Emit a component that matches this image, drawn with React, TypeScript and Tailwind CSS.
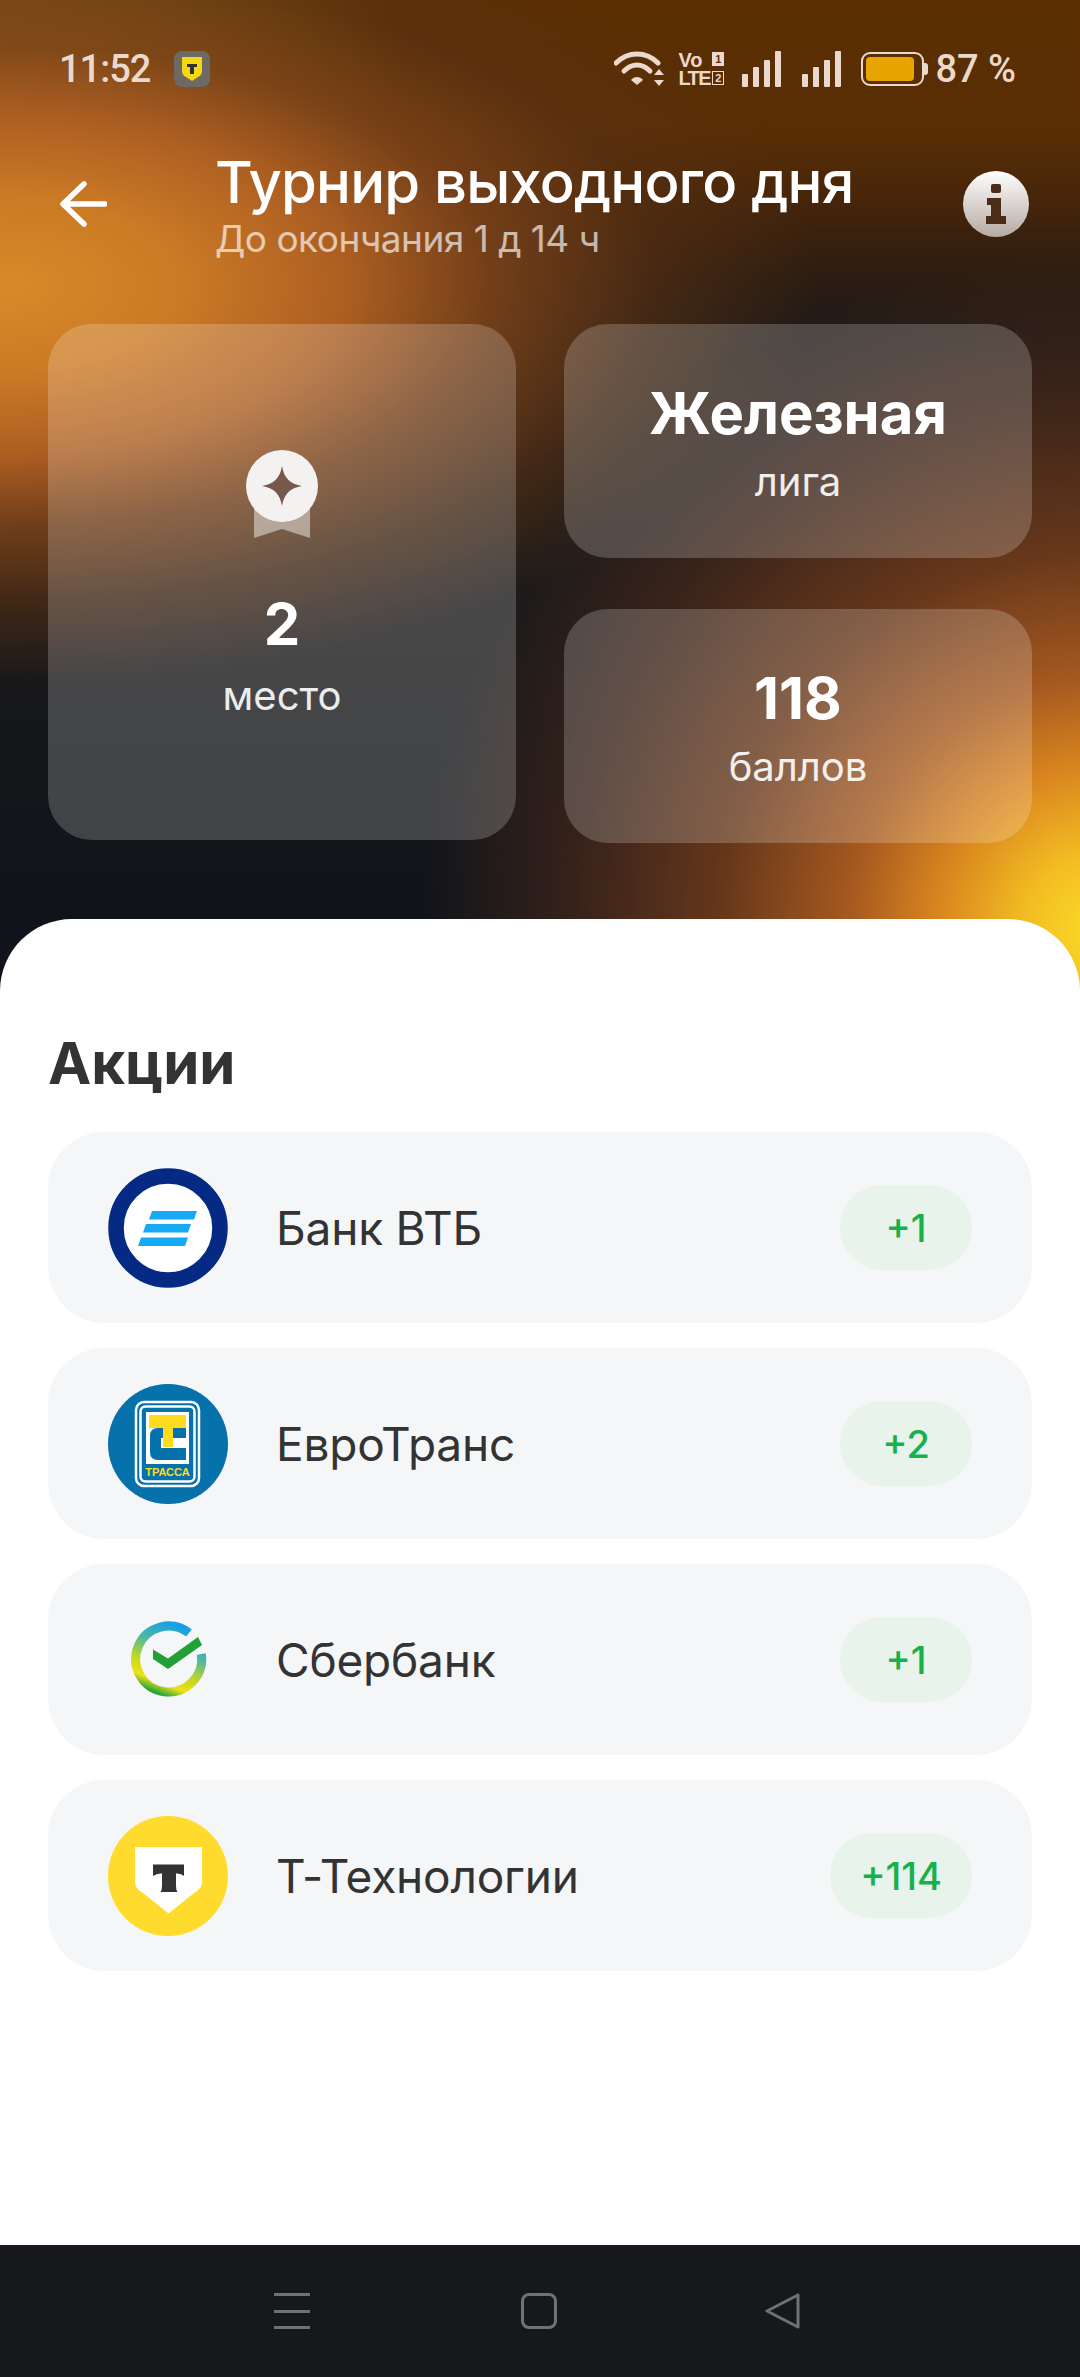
import React from 'react';

const font = { fontFamily: 'Inter, "Noto Sans", sans-serif' };

const stocks = [
  { name: 'Банк ВТБ', delta: '+1', logo: 'vtb' },
  { name: 'ЕвроТранс', delta: '+2', logo: 'trassa' },
  { name: 'Сбербанк', delta: '+1', logo: 'sber' },
  { name: 'Т-Технологии', delta: '+114', logo: 'tbank' }
];

const StatusIcons = () => (
  <div className="flex items-center">
    {/* Wifi */}
    <svg width="50" height="36" viewBox="0 0 50 36" fill="none" stroke="#ead9cc" strokeWidth="5" strokeLinecap="round">
      <path d="M2 12C14 0 32 0 44 12" />
      <path d="M10 20C18 12 28 12 36 20" />
      <path d="M17 29l6 5 6-5c-3-4-9-4-12 0z" fill="#ead9cc" stroke="none" />
      <path d="M45 18l5 6H40zM45 35l5-6H40z" fill="#ead9cc" stroke="none" />
    </svg>
    {/* VoLTE */}
    <div className="relative ml-[14px] h-[36px] w-[46px] text-[20px] font-bold leading-[18px] text-[#ead9cc]" style={{ fontFamily: '"Liberation Sans", sans-serif' }}>
      <div className="flex justify-between"><span>Vo</span><span className="mt-[1px] flex h-[14px] w-[12px] items-center justify-center bg-[#ead9cc] text-[11px] text-[#553008]">1</span></div>
      <div className="flex justify-between"><span className="tracking-[-1.5px]">LTE</span><span className="mt-[2px] flex h-[14px] w-[12px] items-center justify-center border border-[#ead9cc] text-[11px]">2</span></div>
    </div>
    {/* Signal */}
    {[0, 1].map((i) => (
      <div key={i} className={`flex h-[36px] items-end gap-[5px] ${i === 0 ? 'ml-[18px]' : 'ml-[21px]'}`}>
        <div className="h-[13px] w-[6px] rounded-[1px] bg-[#ead9cc]" />
        <div className="h-[20px] w-[6px] rounded-[1px] bg-[#ead9cc]" />
        <div className="h-[27px] w-[6px] rounded-[1px] bg-[#ead9cc]" />
        <div className="h-[36px] w-[6px] rounded-[1px] bg-[#ead9cc]" />
      </div>
    ))}
    {/* Battery */}
    <div className="ml-[20px] flex items-center">
      <div className="flex h-[34px] w-[63px] items-center rounded-[9px] border-2 border-[#ead9cc] p-[3px]">
        <div className="h-[24px] w-[48px] rounded-[4px] bg-[#e8a400]" />
      </div>
      <div className="h-[12px] w-[4px] rounded-r-[3px] bg-[#ead9cc]" />
    </div>
    <span className="ml-[7px] text-[38px] font-medium leading-none text-[#ead9cc]" style={{ fontFamily: 'Roboto, sans-serif' }}>87 %</span>
  </div>
);

const Logo = ({ kind }: { kind: string }) => {
  if (kind === 'vtb') {
    return (
      <svg width="120" height="120" viewBox="0 0 120 120">
        <circle cx="60" cy="60" r="52" fill="#fff" stroke="#052a83" strokeWidth="15.500" />
        <path d="M44 43h45l-3 8.500H41zM38 56h45l-3 8.500H35zM33 69.500h47l-3 8.500H30z" fill="#16aaf5" />
      </svg>
    );
  }
  if (kind === 'trassa') {
    return (
      <svg width="120" height="120" viewBox="0 0 120 120">
        <circle cx="60" cy="60" r="60" fill="#0671ab" />
        <rect x="28" y="18" width="63" height="84" rx="8" fill="none" stroke="#fff" strokeWidth="2.500" />
        <rect x="32.500" y="22.500" width="54" height="75" rx="5" fill="none" stroke="#fff" strokeWidth="2.500" />
        <rect x="38" y="28" width="43" height="52" fill="#fff" />
        <path d="M78 44H50q-8 0-8 8v16q0 8 8 8h28V64H53V54h25z" fill="#0671ab" />
        <path d="M41 31h37v13H65v19H55V44H41z" fill="#fddc1e" />
        <text x="59.500" y="92" textAnchor="middle" fontSize="11" fontWeight="700" fill="#fddc1e" style={{ fontFamily: '"Liberation Sans", sans-serif' }}>ТРАССА</text>
      </svg>
    );
  }
  if (kind === 'sber') {
    return (
      <svg width="120" height="120" viewBox="0 0 120 120">
        <defs>
          <linearGradient id="sb" x1="0.7" y1="0" x2="0.3" y2="1">
            <stop offset="0" stopColor="#12a0e8" />
            <stop offset="0.35" stopColor="#50b8a0" />
            <stop offset="0.65" stopColor="#c5d81e" />
            <stop offset="0.85" stopColor="#efe114" />
            <stop offset="1" stopColor="#2ca63c" />
          </linearGradient>
        </defs>
        <path d="M81 33A33 33 0 1 0 93.300 54" fill="none" stroke="url(#sb)" strokeWidth="9" />
        <path d="M45 49.500l15 9L90 37l4 8-34 24-15-10z" fill="#21a038" />
      </svg>
    );
  }
  return (
    <svg width="120" height="120" viewBox="0 0 120 120">
      <circle cx="60" cy="60" r="60" fill="#ffdb2d" />
      <path d="M27 31h67v35q0 7-8 11L60.500 97.500 35 77q-8-4-8-11z" fill="#fff" />
      <path d="M45 48.500h31V60q-3-3-8-2.500V70q0 4 1.500 6h-17q1.500-2 1.500-6V57.500q-5-.5-9 2.500z" fill="#333" />
    </svg>
  );
};

const StatCard = ({ title, sub }: { title: string; sub: string }) => (
  <div className="flex h-[234px] flex-col items-center justify-center rounded-[44px] bg-white/20 text-white">
    <div className="text-[58px] font-bold leading-[72px]">{title}</div>
    <div className="mt-[10px] text-[40px] leading-[46px] text-white/90">{sub}</div>
  </div>
);

export default function App() {
  return (
    <div className="flex h-[2377px] flex-col overflow-hidden" style={font}>
      <div className="flex flex-1 flex-col bg-[radial-gradient(circle_680px_at_1100px_930px,#fbdc28_0%,#f2bd22_11%,#d9851f_24%,#a5591f_37%,#6b391bf0_56%,#5a2f1a80_78%,#4a281800_100%),radial-gradient(ellipse_820px_400px_at_0px_285px,#d98a28_0%,#cb7a25_22%,#ad5f22_42%,#7c4319e0_60%,#5a321490_80%,#5a2e0500_100%),radial-gradient(ellipse_400px_280px_at_0px_60px,#a07010_0%,#85570c_45%,#5b2e0300_100%),linear-gradient(180deg,#5b2e03_0px,#5a2e05_130px,#46250a_200px,#2a1c12_280px,#1f1a18_330px,#1c1a1a_560px,#10141a_900px)]">
        {/* Status bar */}
        <div className="flex h-[100px] items-center justify-between pl-[59px] pr-[64px] pt-[38px]">
          <div className="flex items-center">
            <span className="text-[38px] font-medium leading-none tracking-[-1px] text-[#ead9cc]" style={{ fontFamily: 'Roboto, sans-serif' }}>11:52</span>
            <div className="ml-[24px] flex h-[36px] w-[36px] items-center justify-center rounded-[8px] bg-[#6d6a64]">
              <svg width="22" height="26" viewBox="0 0 22 26">
                <path d="M1 1h20v14q0 4-4 6l-6 4-6-4q-4-2-4-6z" fill="#f5d90f" />
                <path d="M6 8h10v3h-3v7H9v-7H6z" fill="#333" />
              </svg>
            </div>
          </div>
          <StatusIcons />
        </div>

        {/* Header */}
        <div className="mt-[56px] flex h-[96px] items-center pl-[60px] pr-[51px]">
          <svg width="47" height="46" viewBox="0 0 47 46" fill="none" stroke="#fff" strokeWidth="5.500" strokeLinecap="round" strokeLinejoin="round">
            <path d="M45 23H4M24 3L3 23l21 20" />
          </svg>
          <div className="ml-[108px] flex-1 pt-[4px]">
            <div className="text-[58px] font-medium leading-[62px] tracking-[-0.8px] text-white">Турнир выходного дня</div>
            <div className="mt-[4px] text-[37px] leading-[44px] tracking-[-0.5px] text-white/65">До окончания 1 д 14 ч</div>
          </div>
          <div className="flex h-[66px] w-[66px] items-center justify-center rounded-full bg-gradient-to-b from-white to-[#b5aaa2]">
            <svg width="22" height="40" viewBox="0 0 22 40" fill="#4a2c18">
              <rect x="6" y="0" width="10" height="9" rx="2" />
              <path d="M2 14h14v18h5v8H1v-8h5V21H2z" />
            </svg>
          </div>
        </div>

        {/* Stat cards */}
        <div className="mt-[72px] grid grid-cols-2 gap-x-[48px] px-[48px]">
          <div className="flex h-[516px] flex-col items-center justify-center rounded-[44px] bg-white/20 pt-[5px] text-white">
            <svg width="72" height="88" viewBox="0 0 72 88">
              <path d="M8 50h56v38L36 79 8 88z" fill="#fff" fillOpacity="0.45" />
              <circle cx="36" cy="36" r="36" fill="#f4f2f0" />
              <path d="M36 16c2 12 8 18 20 20-12 2-18 8-20 20-2-12-8-18-20-20 12-2 18-8 20-20z" fill="#77584a" />
            </svg>
            <div className="mt-[50px] text-[58px] font-bold leading-[72px]">2</div>
            <div className="mt-[13px] text-[40px] leading-[46px] text-white/90">место</div>
          </div>
          <div className="flex flex-col gap-[51px]">
            <StatCard title="Железная" sub="лига" />
            <StatCard title="118" sub="баллов" />
          </div>
        </div>

        {/* Sheet */}
        <div className="mt-[76px] flex-1 rounded-t-[72px] bg-white px-[48px] pt-[108px]">
          <h1 className="text-[58px] font-bold leading-[72px] text-[#333]">Акции</h1>
          <div className="mt-[33px] flex flex-col gap-[25px]">
            {stocks.map((s) => (
              <div key={s.name} className="flex h-[191px] items-center rounded-[56px] bg-[#f4f6f8] px-[60px]">
                <Logo kind={s.logo} />
                <span className="ml-[48px] flex-1 text-[46px] leading-none tracking-[-0.2px] text-[#333]">{s.name}</span>
                <span className="flex h-[85px] min-w-[132px] items-center justify-center rounded-[42px] bg-[#e8f3ec] px-[30px] text-[38px] font-medium leading-none text-[#17b04b]">{s.delta}</span>
              </div>
            ))}
          </div>
        </div>
      </div>

      {/* System nav */}
      <div className="flex h-[132px] items-start bg-[#16181b] pl-[274px] pt-[48px]">
        <div className="flex h-[36px] w-[36px] flex-col justify-between">
          <div className="h-[3px] bg-[#6f7174]" />
          <div className="h-[3px] bg-[#6f7174]" />
          <div className="h-[3px] bg-[#6f7174]" />
        </div>
        <div className="ml-[211px] h-[36px] w-[36px] rounded-[8px] border-[3px] border-[#6f7174]" />
        <svg className="ml-[208px]" width="36" height="36" viewBox="0 0 36 36" fill="none" stroke="#6f7174" strokeWidth="3" strokeLinejoin="round">
          <path d="M33 2v32L2 18z" />
        </svg>
      </div>
    </div>
  );
}
